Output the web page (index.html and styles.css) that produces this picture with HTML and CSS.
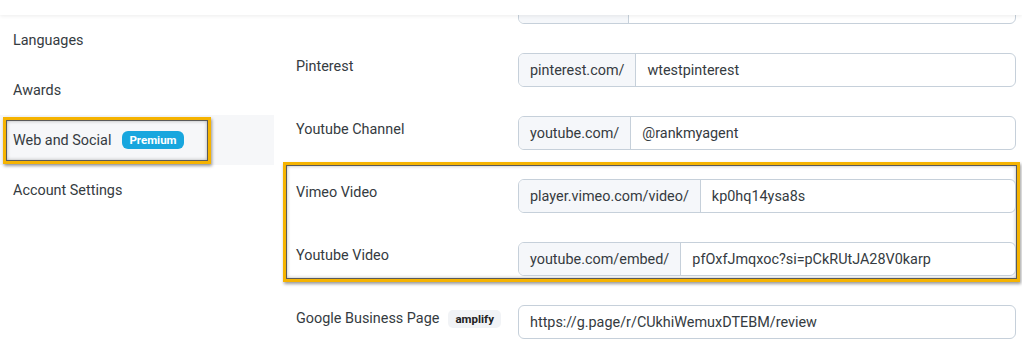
FILE: index.html
```html
<!DOCTYPE html>
<html lang="en">
<head>
  <meta charset="UTF-8">
  <title>Profile - Web and Social</title>
  <link rel="stylesheet" href="styles.css">
</head>
<body>

<div class="topbar"></div>

<div class="page">
  <ul class="side-nav">
    <li class="nav-item">Languages</li>
    <li class="nav-item">Awards</li>
    <li class="nav-item active">
      <span class="mark-box">Web and Social <span class="badge-premium">Premium</span></span>
    </li>
    <li class="nav-item">Account Settings</li>
  </ul>

  <div class="form">
    <div class="row">
      <label class="field-label"></label>
      <div class="input-group">
        <span class="prefix prefix-short"></span>
        <span class="value"></span>
      </div>
    </div>

    <div class="row">
      <label class="field-label">Pinterest</label>
      <div class="input-group">
        <span class="prefix">pinterest.com/</span>
        <span class="value">wtestpinterest</span>
      </div>
    </div>

    <div class="row">
      <label class="field-label">Youtube Channel</label>
      <div class="input-group">
        <span class="prefix">youtube.com/</span>
        <span class="value">@rankmyagent</span>
      </div>
    </div>

    <div class="mark-group">
      <div class="row">
        <label class="field-label">Vimeo Video</label>
        <div class="input-group">
          <span class="prefix">player.vimeo.com/video/</span>
          <span class="value">kp0hq14ysa8s</span>
        </div>
      </div>

      <div class="row">
        <label class="field-label">Youtube Video</label>
        <div class="input-group">
          <span class="prefix">youtube.com/embed/</span>
          <span class="value">pfOxfJmqxoc?si=pCkRUtJA28V0karp</span>
        </div>
      </div>
    </div>

    <div class="row">
      <label class="field-label">Google Business Page <span class="badge-amplify">amplify</span></label>
      <div class="input-group">
        <span class="value">https://g.page/r/CUkhiWemuxDTEBM/review</span>
      </div>
    </div>
  </div>
</div>

</body>
</html>
```

FILE: styles.css
```css
* {
  box-sizing: border-box;
  margin: 0;
  padding: 0;
}

body {
  font-family: Roboto, 'Liberation Sans', sans-serif;
  font-size: 14.4px;
  color: #353b41;
  background: #fff;
  overflow: hidden;
}

.topbar {
  position: fixed;
  top: 0;
  left: 0;
  right: 0;
  height: 15px;
  background: #fff;
  box-shadow: 0 1px 4px rgba(0,0,0,0.08);
  z-index: 5;
}

.page {
  display: flex;
}

.side-nav {
  list-style: none;
  width: 274px;
  flex-shrink: 0;
  padding-top: 15px;
}

.nav-item {
  height: 50px;
  display: flex;
  align-items: center;
  padding-left: 13px;
}

.nav-item.active {
  background: #f6f7f9;
  padding-left: 3px;
}

.mark-box {
  display: flex;
  align-items: center;
  height: 47px;
  padding: 0 24px 0 7px;
  border: 3px solid #f5b301;
  box-shadow: inset 0 0 0 1px #5a5a5a, inset 0 0 4px rgba(0,0,0,0.45), 1px 2px 3px rgba(0,0,0,0.4);
}

.badge-premium {
  margin-left: 11px;
  height: 18px;
  padding: 0 7px;
  border-radius: 6px;
  background: #18a6de;
  color: #fff;
  font-size: 11.5px;
  font-weight: 700;
  line-height: 18px;
}

.form {
  flex: 1;
  display: flex;
  flex-direction: column;
  margin-top: -10px;
  padding: 0 6px 0 22px;
}

.row {
  display: flex;
  align-items: flex-start;
  margin-bottom: 29px;
}

.field-label {
  width: 222px;
  flex-shrink: 0;
  display: flex;
  align-items: center;
  min-height: 20px;
  line-height: 20px;
  padding-top: 4px;
}

.badge-amplify {
  margin-left: 9px;
  height: 18px;
  padding: 0 7px;
  border-radius: 5px;
  background: #f1f3f6;
  color: #222;
  font-size: 11.5px;
  font-weight: 700;
  line-height: 18px;
}

.input-group {
  flex: 1;
  display: flex;
  height: 34px;
  border: 1px solid #c6d0da;
  border-radius: 6px;
  overflow: hidden;
  background: #fff;
}

.prefix {
  display: flex;
  align-items: center;
  padding: 0 11px;
  background: #f5f7fa;
  border-right: 1px solid #c6d0da;
  white-space: nowrap;
}

.prefix-short {
  width: 110px;
}

.value {
  display: flex;
  align-items: center;
  padding: 0 11px;
  white-space: nowrap;
}

.mark-group {
  margin: -17px -4px 23px -13px;
  padding: 14px 1px 3px 10px;
  border: 3px solid #f5b301;
  box-shadow: inset 0 0 0 1px #5a5a5a, inset 0 0 4px rgba(0,0,0,0.45), 1px 2px 3px rgba(0,0,0,0.4);
}

.mark-group .row:last-child {
  margin-bottom: 0;
}
```
